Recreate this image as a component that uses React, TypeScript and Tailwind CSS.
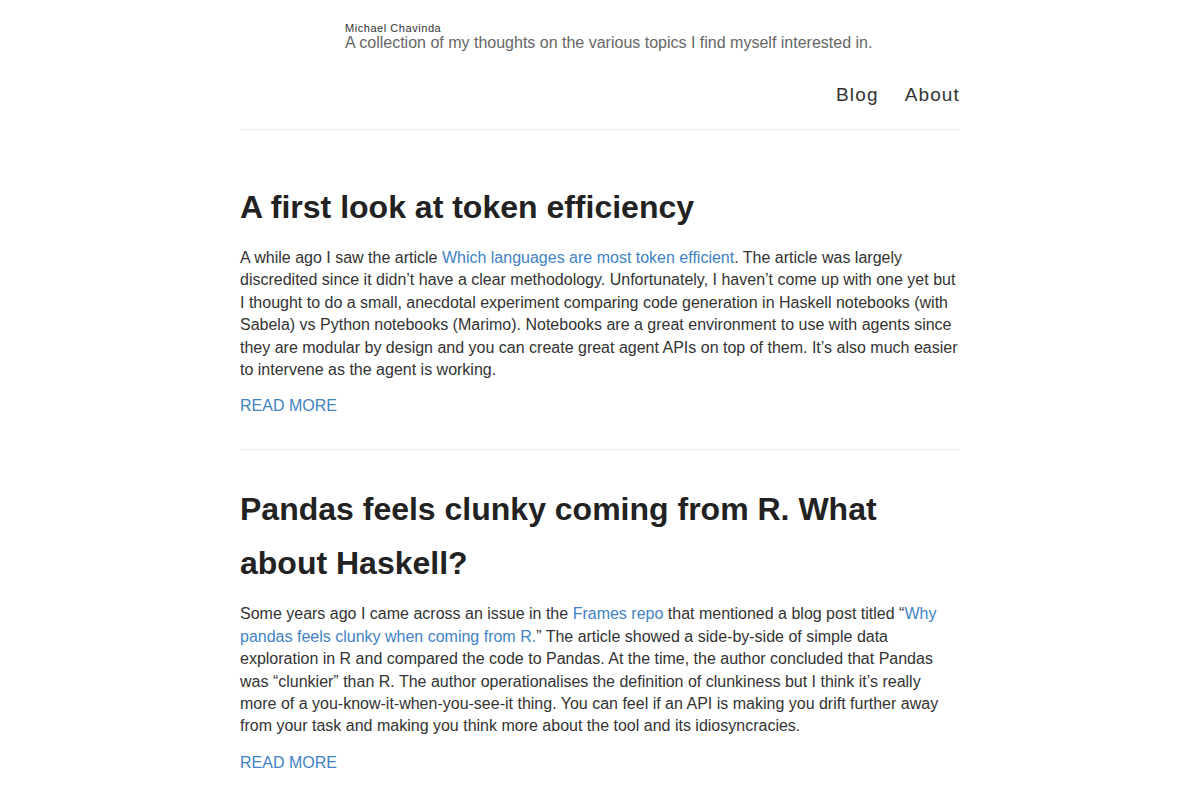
import React from 'react';

type Post = {
  title: string;
  body: React.ReactNode;
};

const linkCls = 'text-[#4183c4] no-underline';

const posts: Post[] = [
  {
    title: 'A first look at token efficiency',
    body: (
      <>
        A while ago I saw the article{' '}
        <a href="#" className={linkCls}>
          Which languages are most token efficient
        </a>
        . The article was largely discredited since it didn’t have a clear methodology. Unfortunately, I haven’t
        come up with one yet but I thought to do a small, anecdotal experiment comparing code generation in Haskell
        notebooks (with Sabela) vs Python notebooks (Marimo). Notebooks are a great environment to use with agents
        since they are modular by design and you can create great agent APIs on top of them. It’s also much easier
        to intervene as the agent is working.
      </>
    ),
  },
  {
    title: 'Pandas feels clunky coming from R. What about Haskell?',
    body: (
      <>
        Some years ago I came across an issue in the{' '}
        <a href="#" className={linkCls}>
          Frames repo
        </a>{' '}
        that mentioned a blog post titled “
        <a href="#" className={linkCls}>
          Why pandas feels clunky when coming from R.
        </a>
        ” The article showed a side-by-side of simple data exploration in R and compared the code to Pandas. At the
        time, the author concluded that Pandas was “clunkier” than R. The author operationalises the definition of
        clunkiness but I think it’s really more of a you-know-it-when-you-see-it thing. You can feel if an API is
        making you drift further away from your task and making you think more about the tool and its
        idiosyncracies.
      </>
    ),
  },
];

function PostSummary({ post, last }: { post: Post; last: boolean }) {
  return (
    <article className={`pt-[32px] pb-[32px] ${last ? '' : 'border-b border-[#eeeeee]'}`}>
      <h2 className="text-[32px] leading-[54px] font-bold text-[#222222] m-0">{post.title}</h2>
      <p className="mt-[13px] text-[16px] leading-[22.4px] text-[#333333]">{post.body}</p>
      <a href="#" className={`${linkCls} block mt-[14px] text-[16px] leading-[22px]`}>
        READ MORE
      </a>
    </article>
  );
}

export default function App() {
  return (
    <div className="min-h-[800px] bg-white font-['Liberation_Sans',Arial,sans-serif]">
      <div className="w-[720px] mx-auto">
        {/* site header */}
        <header className="border-b border-[#eeeeee]">
          <div className="pl-[105px] pt-[22px]">
            <div className="text-[11px] leading-[13px] tracking-[0.05em] text-[#333333]">Michael Chavinda</div>
            <div className="text-[16px] leading-[16px] text-[#666666]">
              A collection of my thoughts on the various topics I find myself interested in.
            </div>
          </div>
          <nav className="flex justify-end gap-[26px] pt-[32px] pb-[22px]">
            <a href="#" className="text-[19px] leading-[24px] tracking-[0.06em] text-[#333333]">
              Blog
            </a>
            <a href="#" className="text-[19px] leading-[24px] tracking-[0.06em] text-[#333333]">
              About
            </a>
          </nav>
        </header>

        <main className="pt-[18px]">
          {posts.map((p, i) => (
            <PostSummary key={p.title} post={p} last={i === posts.length - 1} />
          ))}
        </main>
      </div>
    </div>
  );
}
